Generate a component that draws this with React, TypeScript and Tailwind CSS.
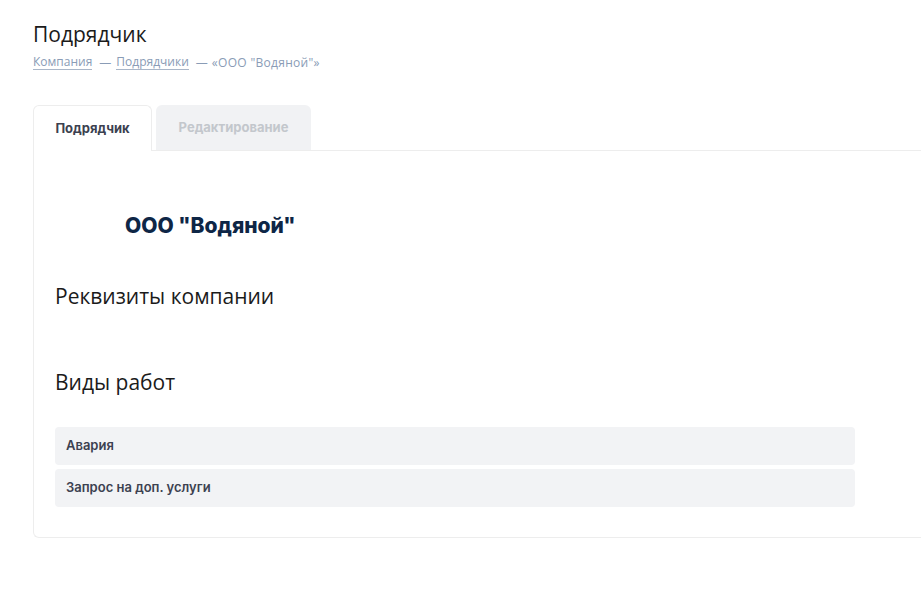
import React from "react";

export default function App() {
  const works = ["Авария", "Запрос на доп. услуги"];
  return (
    <div className="min-h-[596px] w-[921px] overflow-hidden bg-white font-['Open_Sans',sans-serif]">
      <div className="pl-[33px] pt-[22px]">
        <h1 className="text-[21px] leading-[24px] text-[#1b1b1b]">Подрядчик</h1>
        <div className="mt-[9px] flex items-center text-[12px] leading-[14px] text-[#8a9cb6]">
          <a className="border-b border-[#a9b6c8]">Компания</a>
          <span className="ml-[7px] mr-[5px]">—</span>
          <a className="border-b border-[#a9b6c8]">Подрядчики</a>
          <span className="ml-[7px] mr-[4px]">—</span>
          <span className="tracking-[0.3px]">«ООО "Водяной"»</span>
        </div>
        <div className="mt-[35px] w-[900px]">
          <div className="flex font-['Inter',sans-serif] text-[13px] font-bold">
            <div className="relative z-10 flex h-[46px] w-[119px] items-center justify-center rounded-t-[6px] border border-b-0 border-[#ededed] bg-white text-[#3c4150]">
              Подрядчик
            </div>
            <div className="ml-[4px] flex h-[45px] w-[155px] items-center justify-center rounded-t-[6px] bg-[#f1f2f4] text-[#c3c7cc]">
              Редактирование
            </div>
          </div>
          <div className="-mt-px rounded-bl-[6px] border border-r-0 border-[#ededed] bg-white pb-[30px] pl-[21px] pt-[63px]">
            <div className="pl-[70px] font-['Inter',sans-serif] text-[21px] font-extrabold leading-[24px] text-[#0e2646]">
              ООО "Водяной"
            </div>
            <h2 className="mt-[45px] text-[21px] leading-[26px] text-[#1b1b1b]">Реквизиты компании</h2>
            <h2 className="mt-[60px] text-[21px] leading-[26px] text-[#1b1b1b]">Виды работ</h2>
            <div className="mt-[32px] flex w-[800px] flex-col gap-[4px] font-['Inter',sans-serif]">
              {works.map((w) => (
                <div
                  key={w}
                  className="flex h-[38px] items-center rounded-[4px] bg-[#f2f3f5] pl-[11px] text-[13px] font-semibold text-[#3c4150]"
                >
                  {w}
                </div>
              ))}
            </div>
          </div>
        </div>
      </div>
    </div>
  );
}
